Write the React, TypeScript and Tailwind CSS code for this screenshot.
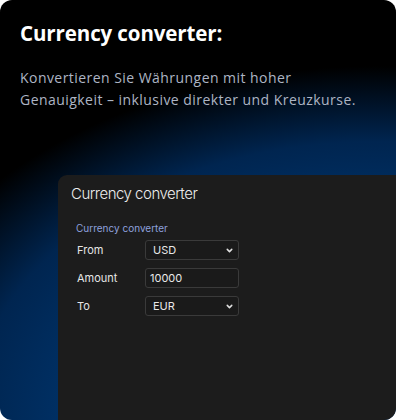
import { ChevronDown } from 'lucide-react'

const ROWS = [
  { label: 'From', value: 'USD', select: true },
  { label: 'Amount', value: '10000', select: false },
  { label: 'To', value: 'EUR', select: true },
]

function Field({ value, select }: { value: string; select: boolean }) {
  return (
    <div className="w-[94px] h-[20px] flex items-center justify-between pl-[7px] pr-[4px] rounded-[3px] border border-[#3a3a3a] bg-[#1a1a1a]">
      <span className={`text-[11px] text-[#e8e8e8] ${select ? '' : '-ml-[3px]'}`}>{value}</span>
      {select && <ChevronDown size={9} strokeWidth={4} className="text-[#e0e0e0]" />}
    </div>
  )
}

export default function App() {
  return (
    <div className="w-[396px] h-[420px] bg-white">
      <div className="w-full h-full rounded-[12px] overflow-hidden flex flex-col bg-[radial-gradient(ellipse_120%_78%_at_95%_100%,#003a78_0%,#00336a_60%,#002550_85%,#000_108%)]">
        <div className="px-5 pt-[21px]">
          <h1 className="text-[20.5px] leading-[25px] font-bold text-white tracking-[-0.1px] [font-family:'Open_Sans',sans-serif]">
            Currency converter:
          </h1>
          <p className="mt-[21px] text-[14px] leading-[22px] text-[#adb5c4] tracking-[0.45px] [font-family:'Open_Sans',sans-serif]">
            Konvertieren Sie Währungen mit hoher
            <br />
            Genauigkeit – inklusive direkter und Kreuzkurse.
          </p>
        </div>
        <div className="flex-1 mt-[64px] ml-[58px] rounded-tl-[9px] bg-[#1c1c1c] px-[13px] pt-[9px] [font-family:Inter,sans-serif]">
          <div className="text-[15px] leading-[20px] text-[#ececec] font-light tracking-[-0.5px]">Currency converter</div>
          <div className="mt-[17px] ml-[5px] text-[10px] leading-[14px] text-[#8ea0dc]">Currency converter</div>
          <div className="mt-[5px] ml-[6px] flex flex-col gap-[8px]">
            {ROWS.map(r => (
              <div key={r.label} className="flex items-center">
                <span className="w-[68px] text-[11px] text-[#e6e6e6]">{r.label}</span>
                <Field value={r.value} select={r.select} />
              </div>
            ))}
          </div>
        </div>
      </div>
    </div>
  )
}
